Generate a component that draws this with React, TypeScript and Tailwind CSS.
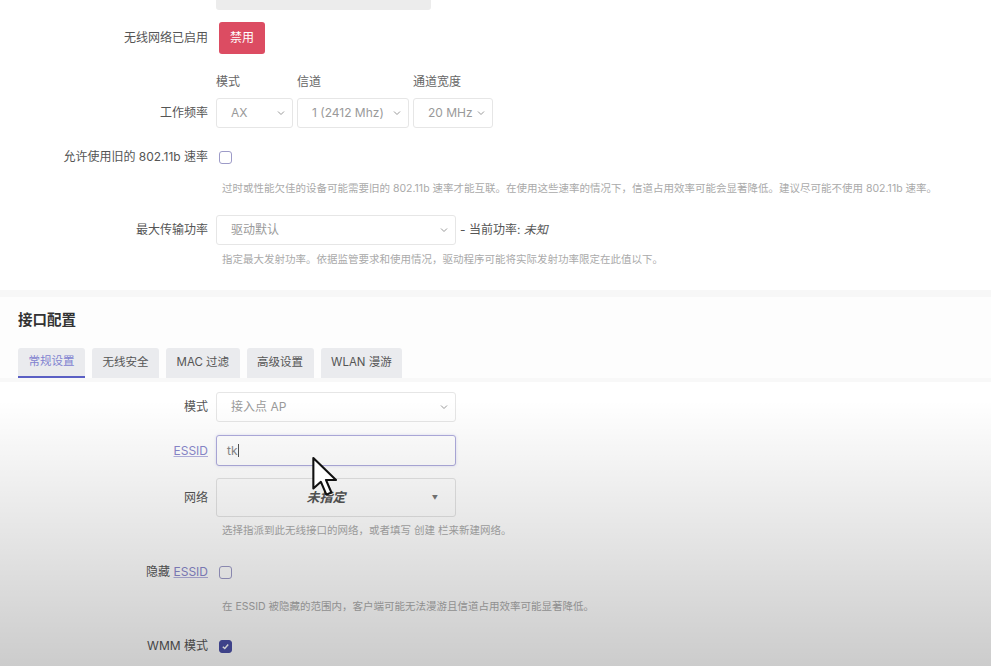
import React from 'react';

const Chevron = () => (
  <svg width="10" height="10" viewBox="0 0 10 10" className="text-[#999] shrink-0">
    <path d="M2 3.5 L5 6.5 L8 3.5" fill="none" stroke="currentColor" strokeWidth="1" />
  </svg>
);

const Select = ({ value, w }: { value: string; w: string }) => (
  <div className={`${w} h-[30px] border border-[#e6e6e6] rounded-[3px] bg-white flex items-center justify-between pl-[14px] pr-[6px] text-[12px] text-[#9a9a9a]`}>
    <span>{value}</span>
    <Chevron />
  </div>
);

const Row = ({ label, children, className = '' }: { label: React.ReactNode; children: React.ReactNode; className?: string }) => (
  <div className={`flex items-center ${className}`}>
    <div className="w-[208px] text-right text-[12px] text-[#555]">{label}</div>
    <div className="ml-[8px] flex items-center">{children}</div>
  </div>
);

const Help = ({ children, className = '' }: { children: React.ReactNode; className?: string }) => (
  <div className={`pl-[222px] text-[10.5px] text-[#aaa] h-[14px] leading-[14px] ${className}`}>{children}</div>
);

const Box = ({ checked = false }: { checked?: boolean }) => (
  <div
    className={`ml-[3px] w-[13px] h-[13px] rounded-[3px] border flex items-center justify-center ${
      checked ? 'bg-[#4c51a8] border-[#4c51a8]' : 'bg-white border-[#9d9bc8]'
    }`}
  >
    {checked && (
      <svg width="9" height="9" viewBox="0 0 10 10">
        <path d="M2 5.2 L4.2 7.3 L8 2.8" fill="none" stroke="white" strokeWidth="1.6" />
      </svg>
    )}
  </div>
);

const tabs = ['常规设置', '无线安全', 'MAC 过滤', '高级设置', 'WLAN 漫游'];

export default function App() {
  return (
    <div className="relative w-[991px] h-[666px] overflow-hidden bg-white font-['Inter','Noto_Sans_CJK_SC',sans-serif]">
      {/* device settings card */}
      <div className="h-[290px] bg-white">
        <div className="ml-[216px] w-[215px] h-[10px] bg-[#ececec] rounded-b-[3px]" />

        <Row label="无线网络已启用" className="mt-[12px] h-[32px]">
          <button className="ml-[3px] w-[46px] h-[32px] rounded-[3px] bg-[#dc4c62] text-white text-[12px]">禁用</button>
        </Row>

        <div className="mt-[21px] h-[14px] flex text-[12px] text-[#666] leading-[14px]">
          <span className="ml-[216px] w-[81px]">模式</span>
          <span className="w-[116px]">信道</span>
          <span>通道宽度</span>
        </div>

        <Row label="工作频率" className="mt-[9px] h-[30px]">
          <div className="flex gap-[4px]">
            <Select value="AX" w="w-[77px]" />
            <Select value="1 (2412 Mhz)" w="w-[112px]" />
            <Select value="20 MHz" w="w-[80px]" />
          </div>
        </Row>

        <Row label="允许使用旧的 802.11b 速率" className="mt-[18px] h-[22px]">
          <Box />
        </Row>

        <Help className="mt-[14px]">
          过时或性能欠佳的设备可能需要旧的 802.11b 速率才能互联。在使用这些速率的情况下，信道占用效率可能会显著降低。建议尽可能不使用 802.11b 速率。
        </Help>

        <Row label="最大传输功率" className="mt-[19px] h-[30px]">
          <Select value="驱动默认" w="w-[240px]" />
          <span className="ml-[4px] text-[12px] text-[#555]">
            - 当前功率: <i>未知</i>
          </span>
        </Row>

        <Help className="mt-[8px]">指定最大发射功率。依据监管要求和使用情况，驱动程序可能将实际发射功率限定在此值以下。</Help>
      </div>

      <div className="h-[7px] bg-[#f7f7f7]" />

      {/* interface config */}
      <div className="h-[81px] bg-[#fdfdfd] pl-[18px]">
        <div className="pt-[14px] text-[14.5px] font-bold text-[#333] leading-[18px]">接口配置</div>
        <div className="mt-[19px] flex gap-[7px]">
          {tabs.map((t, i) => (
            <div
              key={t}
              className={`h-[30px] px-[10.5px] flex items-center rounded-t-[3px] text-[11.5px] bg-[#eaebee] ${
                i === 0 ? 'text-[#7f82d0] border-b-2 border-[#5a5fc4]' : 'text-[#555]'
              }`}
            >
              {t}
            </div>
          ))}
        </div>
      </div>

      <div className="h-[4px] bg-[#f8f8f8]" />

      <div className="bg-white pt-[10px]">
        <Row label="模式" className="h-[30px]">
          <Select value="接入点 AP" w="w-[240px]" />
        </Row>

        <Row
          label={<span className="text-[#8a88cc] underline decoration-[#b5b3e0]">ESSID</span>}
          className="mt-[13px] h-[31px]"
        >
          <div className="w-[240px] h-[31px] border border-[#aeabdc] rounded-[3px] bg-white flex items-center pl-[10px] text-[12px] text-[#888] shadow-[0_0_3px_rgba(120,115,200,0.25)]">
            tk<span className="w-px h-[13px] bg-[#555]" />
          </div>
        </Row>

        <Row label="网络" className="mt-[12px] h-[39px]">
          <div className="relative w-[240px] h-[39px] border border-[#e3e3e3] rounded-[3px] bg-white flex items-center justify-center text-[13px] text-[#555] italic font-bold">
            <span className="ml-[-20px]">未指定</span>
            <span className="absolute right-[17px] top-[14px] text-[6px] text-[#777] not-italic">▼</span>
          </div>
        </Row>

        <Help className="mt-[7px]">选择指派到此无线接口的网络，或者填写 创建 栏来新建网络。</Help>

        <Row
          label={
            <span>
              隐藏 <span className="text-[#8a88cc] underline decoration-[#b5b3e0]">ESSID</span>
            </span>
          }
          className="mt-[23px] h-[22px]"
        >
          <Box />
        </Row>

        <Help className="mt-[17px]">在 ESSID 被隐藏的范围内，客户端可能无法漫游且信道占用效率可能显著降低。</Help>

        <Row label="WMM 模式" className="mt-[21px] h-[22px]">
          <Box checked />
        </Row>
        <div className="h-[40px]" />
      </div>

      {/* video vignette */}
      <div className="pointer-events-none absolute inset-x-0 top-[400px] bottom-0 bg-linear-to-b from-transparent to-black/20" />

      {/* mouse cursor */}
      <svg className="absolute left-[311px] top-[456px]" width="32" height="42" viewBox="0 0 15 20">
        <path
          d="M1 1 L1 15.5 L4.6 12.3 L7.2 18.4 L9.6 17.4 L7 11.4 L11.8 11.4 Z"
          fill="white"
          stroke="#111"
          strokeWidth="1"
          strokeLinejoin="round"
        />
      </svg>
    </div>
  );
}
